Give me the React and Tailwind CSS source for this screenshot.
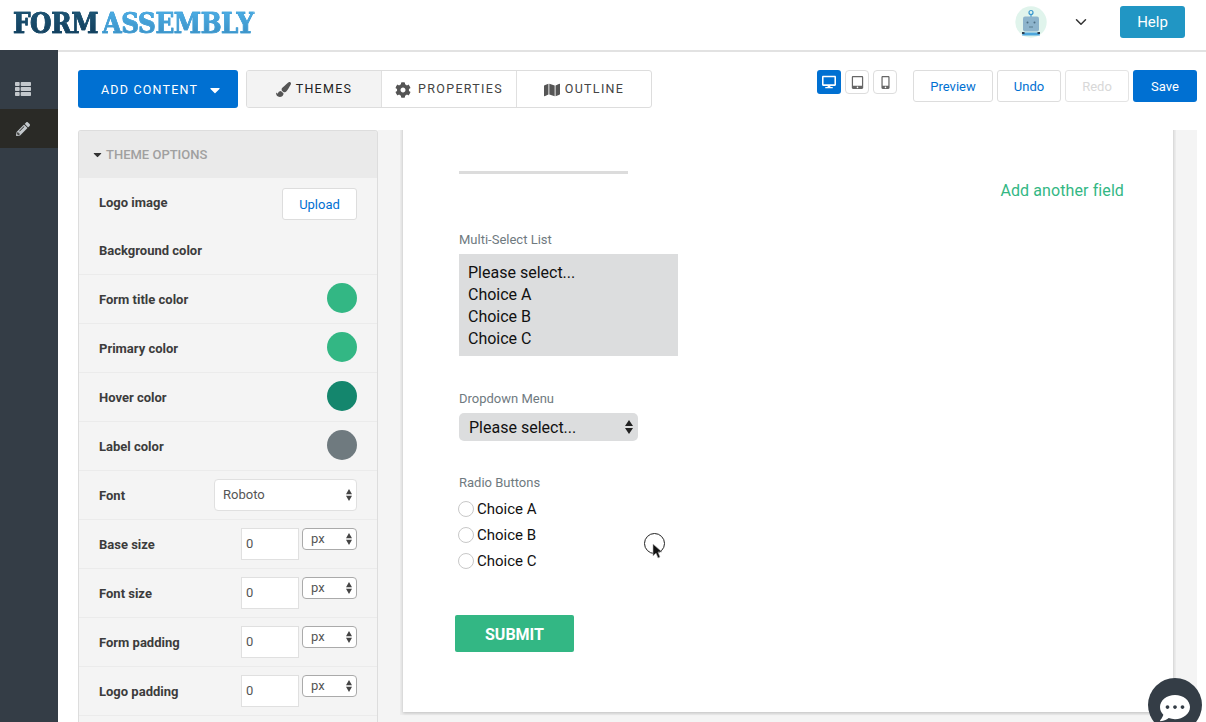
import React from 'react'
import { ChevronDown } from 'lucide-react'
import { FaThList, FaPencilAlt, FaPaintBrush, FaCog, FaMap, FaDesktop, FaTabletAlt, FaMobileAlt, FaCaretDown, FaCommentDots } from 'react-icons/fa'

const font = 'font-["Roboto",sans-serif]'

const Robot = () => (
  <svg width="32" height="32" viewBox="0 0 32 32">
    <circle cx="16" cy="16" r="15.7" fill="#e0f4ec" />
    <circle cx="16" cy="6.5" r="2" fill="none" stroke="#3a97cf" strokeWidth="1.2" />
    <rect x="15.4" y="8" width="1.2" height="3" fill="#3a97cf" />
    <rect x="8" y="10.5" width="16" height="15" rx="2" fill="#8db4cc" />
    <circle cx="12.5" cy="16.5" r="1" fill="#4c6e82" />
    <circle cx="19.5" cy="16.5" r="1" fill="#4c6e82" />
    <path d="M14 21h4" stroke="#4c6e82" strokeWidth="0.8" />
    <path d="M8 26.5h16l1 3H7z" fill="#4da6dc" />
    <rect x="7" y="26" width="2.5" height="2" fill="#2c3e50" />
    <rect x="22.5" y="26" width="2.5" height="2" fill="#2c3e50" />
  </svg>
)

// native select arrows, two separate triangles
const SelectArrows = ({ big }) => (
  <svg width={big ? 8 : 6} height={big ? 14 : 12} viewBox="0 0 8 14" preserveAspectRatio="none" className="shrink-0">
    <path d="M4 0l4 6H0zM4 14L0 8h8z" fill={big ? '#222' : '#444'} />
  </svg>
)

const Header = () => (
  <header className="h-[50px] shrink-0 bg-white flex items-center pl-[13px] pr-[21px]">
    <div className='flex origin-left scale-x-[0.866] font-["DejaVu_Serif",serif] font-bold text-[28.5px] leading-none tracking-[-0.5px] mb-[3px]'>
      <span className="bg-gradient-to-b from-[#1f5878] to-[#103a58] bg-clip-text text-transparent [-webkit-text-stroke:0.7px_#174a6a]">FORM</span>
      <span className="ml-[5px] bg-gradient-to-b from-[#4db0e8] to-[#3a8dc0] bg-clip-text text-transparent [-webkit-text-stroke:0.7px_#43a0d8]">ASSEMBLY</span>
    </div>
    <div className="ml-auto flex items-center mb-[6px]">
      <Robot />
      <ChevronDown size={18} strokeWidth={2} className="ml-[25px] text-[#333]" />
      <button className={`ml-[30px] w-[65px] h-[32px] rounded-[3px] bg-[#2196c4] text-white text-[15px] ${font}`}>Help</button>
    </div>
  </header>
)

const Sidebar = () => (
  <aside className="w-[58px] shrink-0 bg-[#343d46] pt-[18px] flex flex-col">
    <div className="h-[41px] flex items-center pl-[15px] text-[#c3c8cc]">
      <FaThList size={16} />
    </div>
    <div className="h-[39px] bg-[#2a2a26] flex items-center pl-[16px] text-[#c3c8cc]">
      <FaPencilAlt size={14} />
    </div>
  </aside>
)

const Tab = ({ icon, label, active, w }) => (
  <div className={`${w} shrink-0 h-full flex items-center justify-center gap-[5px] text-[12.5px] tracking-[1.3px] pt-[1px] border-r border-[#e0e0e0] last:border-r-0 ${active ? 'bg-[#f3f3f3] text-[#222]' : 'text-[#444]'}`}>
    {icon}
    {label}
  </div>
)

const Toolbar = () => (
  <div className={`h-[38px] flex items-start ${font}`}>
    <button className="w-[160px] h-[38px] rounded-[3px] bg-[#0070d2] text-white text-[12.5px] tracking-[1.2px] pt-[2px] pl-[23px] flex items-center gap-[9px]">
      ADD CONTENT
      <FaCaretDown size={16} />
    </button>
    <div className="ml-[8px] w-[406px] h-[38px] border border-[#dddddd] rounded-[3px] flex overflow-hidden">
      <Tab active w="w-[135px]" label="THEMES" icon={<FaPaintBrush size={15} className="text-[#555]" />} />
      <Tab w="w-[135px]" label="PROPERTIES" icon={<FaCog size={16} className="text-[#555] mr-[2px]" />} />
      <Tab w="w-[134px]" label="OUTLINE" icon={<FaMap size={16} className="text-[#555]" />} />
    </div>
    <div className="ml-auto flex items-start">
      <div className="w-[24px] h-[24px] rounded-[3px] bg-[#0070d2] text-white flex items-center justify-center"><FaDesktop size={14} /></div>
      <div className="ml-[4px] w-[24px] h-[24px] rounded-[4px] border border-[#dddddd] text-[#666] flex items-center justify-center"><FaTabletAlt size={13} /></div>
      <div className="ml-[4px] w-[24px] h-[24px] rounded-[4px] border border-[#dddddd] text-[#666] flex items-center justify-center"><FaMobileAlt size={13} /></div>
      <button className="ml-[16px] w-[80px] h-[32px] pt-[1px] rounded-[3px] border border-[#dddddd] text-[#0070d2] text-[13px]">Preview</button>
      <button className="ml-[4px] w-[64px] h-[32px] pt-[1px] rounded-[3px] border border-[#dddddd] text-[#0070d2] text-[13px]">Undo</button>
      <button className="ml-[4px] w-[64px] h-[32px] pt-[1px] rounded-[3px] border border-[#e4e4e4] text-[#d8d8d8] text-[13px]">Redo</button>
      <button className="ml-[4px] w-[64px] h-[32px] pt-[1px] rounded-[3px] bg-[#0070d2] text-white text-[13px]">Save</button>
    </div>
  </div>
)

const Label = ({ children }) => (
  <span className="mt-[2px] text-[13px] font-bold text-[#3c3c3c]">{children}</span>
)

const Row = ({ label, children }) => (
  <div className="h-[49px] shrink-0 flex items-center justify-between pl-[20px] pr-[20px] border-b border-[#ebebeb]">
    <Label>{label}</Label>
    {children}
  </div>
)

const Swatch = ({ color }) => <span className={`w-[30px] h-[30px] mb-[2px] rounded-full ${color}`} />

const SizeControl = () => (
  <div className="flex items-start gap-[3px]">
    <div className="w-[58px] h-[32px] bg-white border border-[#e0e0e0] flex items-center pl-[4px] text-[13px] text-[#555]">0</div>
    <div className="w-[55px] h-[22px] bg-white border border-[#aaaaaa] rounded-[4px] flex items-center justify-between pl-[8px] pr-[4px] text-[13px] text-[#555]">
      px
      <SelectArrows />
    </div>
  </div>
)

const ThemePanel = () => (
  <div className={`w-[300px] shrink-0 bg-[#f4f4f4] border-x border-t border-[#dddddd] rounded-t-[3px] flex flex-col overflow-hidden ${font}`}>
    <div className="h-[47px] shrink-0 bg-[#eaeaea] flex items-center pl-[12px] gap-[2px] text-[13px] font-medium text-[#a0a0a0]">
      <FaCaretDown size={13} className="text-[#333]" />
      THEME OPTIONS
    </div>
    <div className="h-[48px] shrink-0 flex items-center justify-between px-[20px]">
      <Label>Logo image</Label>
      <button className="mt-[4px] w-[75px] h-[32px] pt-[1px] bg-white border border-[#dddddd] rounded-[3px] text-[#0070d2] text-[13px]">Upload</button>
    </div>
    <Row label="Background color" />
    <Row label="Form title color"><Swatch color="bg-[#33b784]" /></Row>
    <Row label="Primary color"><Swatch color="bg-[#33b784]" /></Row>
    <Row label="Hover color"><Swatch color="bg-[#14866d]" /></Row>
    <Row label="Label color"><Swatch color="bg-[#6f7a7f]" /></Row>
    <Row label="Font">
      <div className="w-[143px] h-[32px] bg-white border border-[#e0e0e0] rounded-[4px] flex items-center justify-between pl-[8px] pr-[4px] text-[13px] text-[#555]">
        Roboto
        <SelectArrows />
      </div>
    </Row>
    <Row label="Base size"><SizeControl /></Row>
    <Row label="Font size"><SizeControl /></Row>
    <Row label="Form padding"><SizeControl /></Row>
    <Row label="Logo padding"><SizeControl /></Row>
  </div>
)

const Radio = ({ label }) => (
  <div className="h-[26px] flex items-center">
    <span className="w-[16px] h-[16px] rounded-full bg-white border border-[#c8c8c8] ml-[-1px]" />
    <span className="ml-[3px] text-[15px] text-[#111]">{label}</span>
  </div>
)

const FormCard = () => (
  <div className={`relative w-[770px] h-[592px] -mt-[10px] bg-white shadow-[0_1px_3px_rgba(0,0,0,0.2),0_0_0_3px_#ededed] pl-[56px] ${font}`}>
    <div className="pt-[51px] flex items-start pr-[49px]">
      <div className="w-[169px] h-[3px] bg-[#dcdcdc]" />
      <span className="ml-auto mt-[8px] text-[16px] tracking-[0.1px] leading-[24px] text-[#33b784]">Add another field</span>
    </div>
    <p className="mt-[28px] text-[13px] leading-[18px] text-[#6f7a7f]">Multi-Select List</p>
    <div className="mt-[5px] w-[219px] h-[102px] bg-[#dcddde] pl-[9px] pt-[8px] text-[16px] leading-[22px] text-[#111]">
      <div>Please select...</div>
      <div>Choice A</div>
      <div>Choice B</div>
      <div>Choice C</div>
    </div>
    <p className="mt-[34px] text-[13px] leading-[18px] text-[#6f7a7f]">Dropdown Menu</p>
    <div className="mt-[5px] w-[179px] h-[28px] bg-[#dcddde] rounded-[5px] pl-[10px] pr-[5px] flex items-center justify-between text-[16px] text-[#111]">
      <span className="mt-[2px]">Please select...</span>
      <SelectArrows big />
    </div>
    <p className="mt-[33px] text-[13px] leading-[18px] text-[#6f7a7f]">Radio Buttons</p>
    <div className="mt-[4px]">
      <Radio label="Choice A" />
      <Radio label="Choice B" />
      <Radio label="Choice C" />
    </div>
    <button className="block mt-[41px] ml-[-4px] w-[119px] h-[37px] pt-[3px] rounded-[2px] bg-[#33b784] text-white text-[16px] font-bold">SUBMIT</button>

    {/* recorded mouse pointer */}
    <div className="absolute left-[241px] top-[413px] w-[21px] h-[21px] rounded-full border border-[#222]" />
    <svg className="absolute left-[249px] top-[423px]" width="12" height="17" viewBox="0 0 12 17">
      <path d="M1 1v12l3-3 2 5 2-1-2-5h4z" fill="#111" stroke="#bbb" strokeWidth="0.6" />
    </svg>
  </div>
)

export default function App() {
  return (
    <div className="relative h-[722px] w-[1206px] overflow-hidden bg-white flex flex-col">
      <Header />
      <div className="flex-1 flex min-h-0">
        <Sidebar />
        <main className="flex-1 min-w-0 flex flex-col border-t-2 border-[#e2e2e2] pt-[18px] pl-[20px] pr-[9px] overflow-hidden">
          <Toolbar />
          <div className="mt-[22px] flex flex-1 min-h-0">
            <ThemePanel />
            <div className="flex-1 bg-[#f4f4f4] pl-[25px] overflow-hidden">
              <FormCard />
            </div>
          </div>
        </main>
      </div>
      <div className="absolute left-[1148px] top-[678px] w-[54px] h-[54px] rounded-full bg-[#343d46] flex items-center justify-center text-white">
        <FaCommentDots size={30} className="mt-[6px]" />
      </div>
    </div>
  )
}
